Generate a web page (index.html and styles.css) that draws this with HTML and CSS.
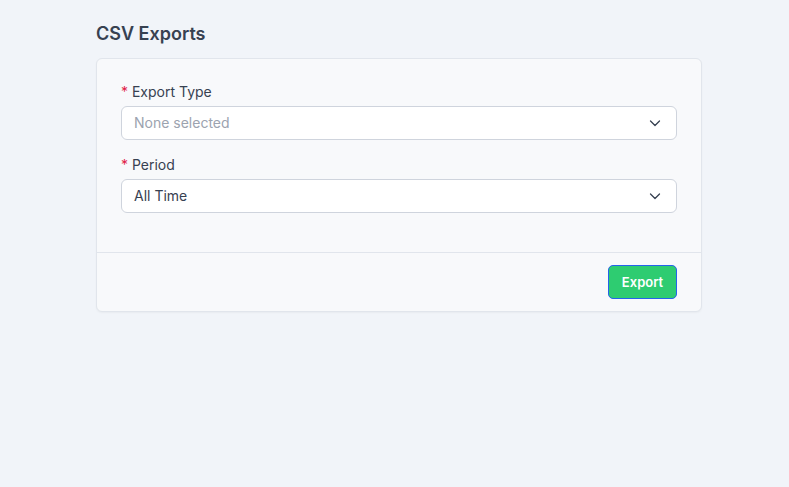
FILE: index.html
```html
<!DOCTYPE html>
<html>
<head>
<meta charset="utf-8">
<link rel="stylesheet" href="styles.css">
</head>
<body>
<div class="page">
  <h1 class="title">CSV Exports</h1>
  <div class="card">
    <div class="card-body">
      <div class="field">
        <label class="label"><span class="req">*</span> Export Type</label>
        <div class="select placeholder">
          <span>None selected</span>
          <svg class="chev" width="14" height="14" viewBox="0 0 14 14"><path d="M2.5 5 L7 9.5 L11.5 5" fill="none" stroke="#374151" stroke-width="1.3" stroke-linecap="round" stroke-linejoin="round"/></svg>
        </div>
      </div>
      <div class="field">
        <label class="label"><span class="req">*</span> Period</label>
        <div class="select">
          <span>All Time</span>
          <svg class="chev" width="14" height="14" viewBox="0 0 14 14"><path d="M2.5 5 L7 9.5 L11.5 5" fill="none" stroke="#374151" stroke-width="1.3" stroke-linecap="round" stroke-linejoin="round"/></svg>
        </div>
      </div>
    </div>
    <div class="card-footer">
      <button class="btn">Export</button>
    </div>
  </div>
</div>
</body>
</html>
```
FILE: styles.css
```css
* { box-sizing: border-box; }
html, body { margin: 0; padding: 0; }
body {
  background: #f1f4f9;
  font-family: Inter, "Noto Sans", sans-serif;
  color: #374151;
  width: 789px;
  height: 487px;
}
.page {
  padding: 23px 87px 0 96px;
}
.title {
  margin: 0 0 13px 0;
  font-size: 18px;
  line-height: 22px;
  font-weight: 600;
  color: #374151;
}
.card {
  width: 606px;
  background: #f8f9fb;
  border: 1px solid #e1e5ec;
  border-radius: 6px;
  box-shadow: 0 1px 2px rgba(0,0,0,0.04);
}
.card-body {
  padding: 24px 24px 39px 24px;
  display: flex;
  flex-direction: column;
  gap: 16px;
}
.field {
  display: flex;
  flex-direction: column;
  gap: 6px;
}
.label {
  font-size: 14px;
  line-height: 17px;
  color: #374151;
}
.req { color: #e11d48; }
.select {
  height: 34px;
  background: #fff;
  border: 1px solid #cfd4dd;
  border-radius: 6px;
  display: flex;
  align-items: center;
  justify-content: space-between;
  padding: 0 14px 1px 12px;
  font-size: 14px;
  color: #374151;
}
.select.placeholder { color: #9ca3af; }
.chev { display: block; }
.card-footer {
  border-top: 1px solid #e1e5ec;
  padding: 12px 24px 12px 24px;
  display: flex;
  justify-content: flex-end;
}
.btn {
  height: 34px;
  width: 69px;
  background: #2ecc71;
  border: 1px solid #2563eb;
  border-radius: 5px;
  color: #fff;
  font-family: Inter, sans-serif;
  font-weight: 600;
  font-size: 13px;
  padding: 0;
}
```
